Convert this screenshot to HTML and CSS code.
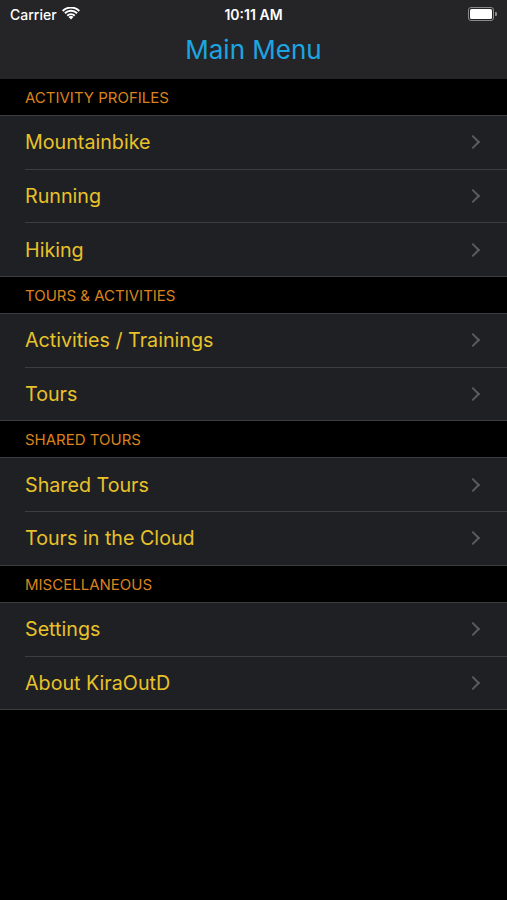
FILE: index.html
```html
<!DOCTYPE html>
<html lang="en">
<head>
    <meta charset="UTF-8">
    <title>Main Menu</title>
    <link rel="stylesheet" href="styles.css">
</head>
<body>

    <div class="top-bar">
        <div class="status-bar">
            <div class="carrier">
                Carrier
                <svg class="wifi" width="18" height="13" viewBox="0 0 18 13">
                    <path d="M9 12.5 L6.6 10 A3.4 3.4 0 0 1 11.4 10 Z" fill="#fff"/>
                    <path d="M4.6 8 A6.2 6.2 0 0 1 13.4 8 L12 9.4 A4.3 4.3 0 0 0 6 9.4 Z" fill="#fff"/>
                    <path d="M2.2 5.6 A9.6 9.6 0 0 1 15.8 5.6 L14.4 7 A7.6 7.6 0 0 0 3.6 7 Z" fill="#fff"/>
                    <path d="M0 3.3 A12.7 12.7 0 0 1 18 3.3 L16.6 4.7 A10.7 10.7 0 0 0 1.4 4.7 Z" fill="#fff"/>
                </svg>
            </div>
            <div class="time">10:11 AM</div>
            <div class="battery">
                <div class="battery-body"><div class="battery-level"></div></div>
                <div class="battery-tip"></div>
            </div>
        </div>
        <div class="nav-title">Main Menu</div>
    </div>

    <div class="section-header">ACTIVITY PROFILES</div>
    <div class="group">
        <div class="row"><span>Mountainbike</span><span class="chevron"></span></div>
        <div class="row"><span>Running</span><span class="chevron"></span></div>
        <div class="row"><span>Hiking</span><span class="chevron"></span></div>
    </div>

    <div class="section-header">TOURS &amp; ACTIVITIES</div>
    <div class="group">
        <div class="row"><span>Activities / Trainings</span><span class="chevron"></span></div>
        <div class="row"><span>Tours</span><span class="chevron"></span></div>
    </div>

    <div class="section-header">SHARED TOURS</div>
    <div class="group">
        <div class="row"><span>Shared Tours</span><span class="chevron"></span></div>
        <div class="row"><span>Tours in the Cloud</span><span class="chevron"></span></div>
    </div>

    <div class="section-header">MISCELLANEOUS</div>
    <div class="group">
        <div class="row"><span>Settings</span><span class="chevron"></span></div>
        <div class="row"><span>About KiraOutD</span><span class="chevron"></span></div>
    </div>

</body>
</html>
```

FILE: styles.css
```css
body {
    margin: 0;
    background: #000;
    font-family: 'Inter', 'Liberation Sans', sans-serif;
    min-height: 100vh;
}
.top-bar {
    background: #252528;
    height: 79px;
    display: flex;
    flex-direction: column;
}
.status-bar {
    height: 28px;
    display: flex;
    align-items: center;
    justify-content: space-between;
    padding: 0 10px;
    color: #fff;
    font-size: 14px;
    font-weight: 500;
}
.carrier {
    display: flex;
    align-items: center;
    gap: 5px;
    width: 90px;
}
.wifi {
    margin-top: -2px;
}
.time {
    font-weight: 600;
}
.battery {
    display: flex;
    align-items: center;
    width: 90px;
    justify-content: flex-end;
}
.battery-body {
    width: 22px;
    height: 10px;
    border: 1px solid #8a8a8c;
    border-radius: 3px;
    padding: 1px;
}
.battery-level {
    width: 100%;
    height: 100%;
    background: #fff;
    border-radius: 1.5px;
}
.battery-tip {
    width: 2px;
    height: 4px;
    background: #8a8a8c;
    border-radius: 0 1px 1px 0;
    margin-left: 1px;
}
.nav-title {
    text-align: center;
    color: #1ba6e2;
    font-size: 26px;
    line-height: 44px;
}
.section-header {
    height: 36px;
    line-height: 38px;
    padding-left: 25px;
    color: #da831c;
    font-size: 15px;
    background: #000;
}
.group {
    background: #1f2023;
    border-top: 1px solid #3d3d41;
    border-bottom: 1px solid #3d3d41;
}
.row {
    height: 52.7px;
    margin-left: 25px;
    padding-right: 27px;
    display: flex;
    align-items: center;
    justify-content: space-between;
    color: #e8c22a;
    font-size: 19.7px;
}
.row + .row {
    border-top: 1px solid #3d3d41;
}
.chevron {
    width: 8px;
    height: 8px;
    border-right: 2px solid #5b5b60;
    border-top: 2px solid #5b5b60;
    transform: rotate(45deg);
    margin-right: 2px;
}
```
